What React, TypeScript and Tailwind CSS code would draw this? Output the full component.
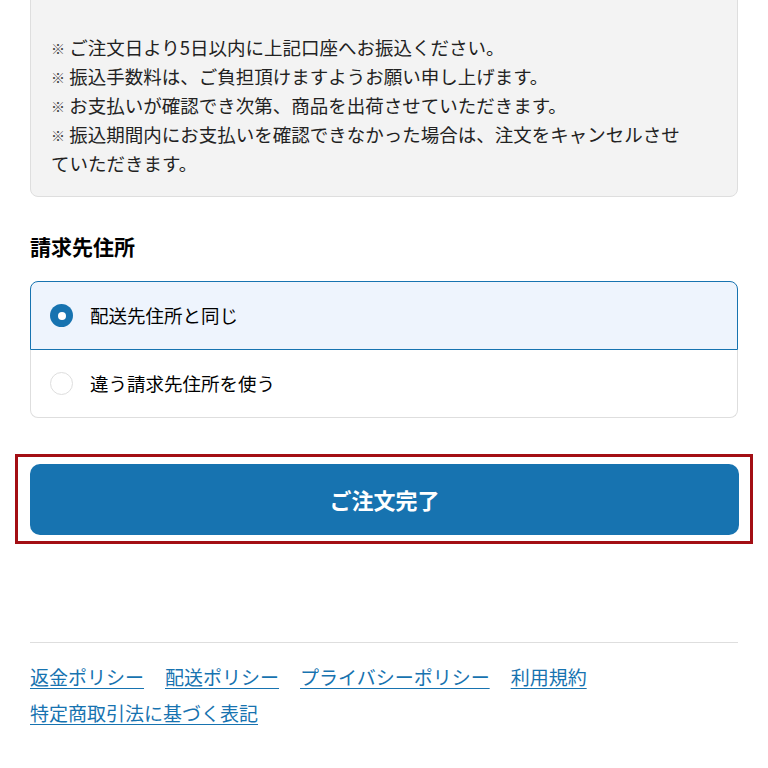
const FONT = { fontFamily: '"Noto Sans CJK JP", "Noto Sans", sans-serif' };

const notes = [
  "ご注文日より5日以内に上記口座へお振込ください。",
  "振込手数料は、ご負担頂けますようお願い申し上げます。",
  "お支払いが確認でき次第、商品を出荷させていただきます。",
  "振込期間内にお支払いを確認できなかった場合は、注文をキャンセルさせていただきます。",
];

const links = ["返金ポリシー", "配送ポリシー", "プライバシーポリシー", "利用規約", "特定商取引法に基づく表記"];

export default function App() {
  return (
    <div className="min-h-[768px] bg-white px-[30px] text-black overflow-hidden" style={FONT}>
      {/* 振込案内 */}
      <div className="-mt-[16px] rounded-[8px] border border-[#dedede] bg-[#f3f3f3] pl-[20px] pr-[45px] pt-[48px] pb-[18px] text-[18.5px] leading-[29px] text-[#222]">
        {notes.map((n) => (
          <p key={n}>
            <span className="inline-block align-[1px] text-[14px] leading-none font-bold text-[#444]">※</span> {n}
          </p>
        ))}
      </div>

      <h2 className="mt-[35px] text-[21px] font-bold leading-[28px]">請求先住所</h2>

      <div className="mt-[21px]">
        <label className="flex h-[69px] items-center gap-[17px] rounded-t-[8px] border border-[#1773b0] bg-[#eef4fd] pl-[19px] text-[18.5px]">
          <span className="flex h-[23px] w-[23px] items-center justify-center rounded-full bg-[#1773b0]">
            <span className="h-[8px] w-[8px] rounded-full bg-white" />
          </span>
          配送先住所と同じ
        </label>
        <label className="flex h-[68px] items-center gap-[17px] rounded-b-[8px] border-x border-b border-[#dedede] pl-[19px] text-[18.5px]">
          <span className="h-[23px] w-[23px] rounded-full border border-[#dedede] bg-white" />
          違う請求先住所を使う
        </label>
      </div>

      <div className="-mx-[15px] mt-[36px] border-[3px] border-[#a30e14] pt-[7px] pb-[6px] pl-[12px] pr-[11px]">
        <button className="flex h-[71px] w-full items-center justify-center rounded-[10px] bg-[#1773b0] text-[22px] font-bold text-white">
          ご注文完了
        </button>
      </div>

      <div className="mt-[98px] border-t border-[#dedede] pt-[20px]">
        <div className="flex flex-wrap gap-x-[21px] gap-y-[8px] text-[19px] leading-[28px]">
          {links.map((l) => (
            <a key={l} href="#" className="text-[#1773b0] underline underline-offset-[3px]">
              {l}
            </a>
          ))}
        </div>
      </div>
    </div>
  );
}
